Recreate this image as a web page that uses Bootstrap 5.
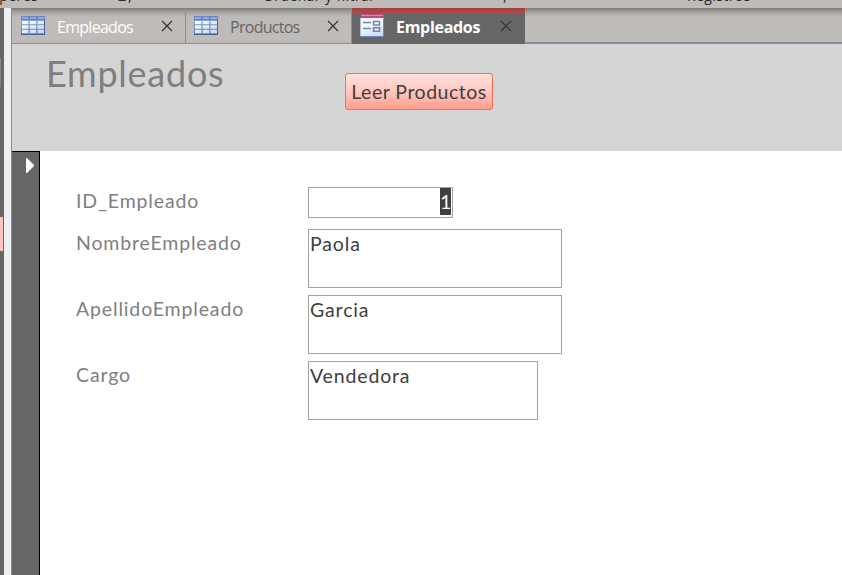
<!DOCTYPE html>
<html lang="es">
<head>
<meta charset="utf-8">
<title>Empleados</title>
<link href="https://cdn.jsdelivr.net/npm/bootstrap@5.3.0/dist/css/bootstrap.min.css" rel="stylesheet">
<style>
body{width:842px;height:575px;background:#fff;font-family:Lato,"Open Sans",sans-serif;color:#404040}
.ribbon{height:8px;background:#bfbbb8;font:14px/16px "Open Sans",sans-serif;letter-spacing:.4px;color:#262626}
.ribbon span{position:absolute;top:-12px;white-space:nowrap}
.navpane{width:4px;background:#696765}
.navpane i{position:absolute;left:0;display:block}
.nav-focus{top:209px;width:3px;height:34px;background:#ffc3c0}
.nav-thumb{top:50px;width:1px;height:29px;background:#858585}
.gutter{width:8px;background:#eff0f2;border-right:1px solid #868b92}
.tabstrip{height:36px;background:linear-gradient(#777 0,#929090 2px,#aaa7a5 5px,#b9b5b2 8px,#bfbbb8 9px);border-bottom:2px solid #8b9096;font-family:"Open Sans",sans-serif;font-size:16px}
.doc-tab{height:36px;border-right:1px solid #8b9096;border-bottom:1px solid #8b9096;color:#666;line-height:36px;background:linear-gradient(#777 0,#929090 2px,#aaa7a5 5px,#b9b5b2 8px,#bfbbb8 9px)}
.doc-tab svg{position:absolute}
.doc-tab .ic{left:9px;top:8px}
.doc-tab .cl{top:12px}
.doc-tab span{position:absolute;top:1px}
.t1{width:174px;color:#fff}.t2{width:166px}.t3{width:173px;background:linear-gradient(#a04044 0,#b6474b 5px,#666 5px);color:#fff;border:0}
.t1 span,.t2 span{letter-spacing:-.72px}
.t1 span{left:45px}.t2 span{left:44px}.t3 span{left:44px;font-weight:700;letter-spacing:-.3px}
.form-head{height:107px;background:#d5d5d5}
.form-head h1{font-size:36px;line-height:44px;font-weight:400;color:#7f7f7f;margin:7px 0 0 34px;width:299px;letter-spacing:.75px}
.btn-read{width:148px;height:37px;margin-top:29px;padding:0;font-size:19.5px;line-height:35px;border:1px solid #f1704d;border-radius:3px;color:#404040;background:linear-gradient(#ffe0dc,#ffc8c0 50%,#ff9d8d);letter-spacing:.5px}
.selector{width:28px;background:#666;border:solid #000;border-width:1px 1px 0 0;padding:6px 0 0 14px}
.fields{padding:36px 0 0 36px;font-size:19.5px;letter-spacing:.85px}
.fields label{width:232px;color:#7f7f7f;line-height:27px}
.field-box{border:1px solid #a3a3a3;height:59px;width:254px;padding:0 1px;line-height:27px}
.row-id{margin-bottom:11px}
.row-f{margin-bottom:7px}
.b-id{width:145px;height:31px;padding-right:1px}
.b-id span{background:#404040;color:#fff;height:27px;width:11px;letter-spacing:0}
.b-cargo{width:230px}
</style>
<script src="https://cdn.jsdelivr.net/npm/bootstrap@5.3.0/dist/js/bootstrap.bundle.min.js"></script>
</head>
<body class="overflow-hidden d-flex flex-column m-0">
<svg width="0" height="0" class="position-absolute">
<defs>
<linearGradient id="gc" x2="1" y2="1"><stop offset="0" stop-color="#fff"/><stop offset="1" stop-color="#c3d4f3"/></linearGradient>
<linearGradient id="gb" x2="0" y2="1"><stop offset="0" stop-color="#8fabda"/><stop offset="1" stop-color="#5f7dad"/></linearGradient>
<symbol id="grid" viewBox="0 0 24 19"><path fill="url(#gb)" d="M0 0h24v19H0z"/><path fill="#6685c4" d="M0 0h24v4H0z"/><path fill="#91acd9" d="M1 1h6v2H1zM9 1h6v2H9zM17 1h6v2h-6z"/><path fill="url(#gc)" d="M1 5h6.500v3.300H1zM8.700 5h6.500v3.300H8.700zM16.500 5h6.500v3.300h-6.500zM1 9.300h6.500v3.500H1zM8.700 9.300h6.500v3.500H8.700zM16.500 9.300h6.500v3.500h-6.500zM1 13.800h6.500v3.500H1zM8.700 13.800h6.500v3.500H8.700zM16.500 13.800h6.500v3.500h-6.500z"/><path fill="#44638f" d="M0 18h24v1H0zM23 4h1v15h-1z"/></symbol>
<symbol id="frm" viewBox="0 0 24 23"><path fill="#b4bdd4" d="M0 4h24v19H0z"/><path fill="#fafbff" d="M1 4h22v17H1z"/><path fill="url(#gc)" d="M1 12h22v10H1z"/><path fill="#6f8cc0" d="M0 22h24v1H0zM23 5h1v18h-1z"/><path fill="#b94d7b" d="M1 0h23v4H1z"/><path fill="#e287a8" d="M1 1h22v1H1z"/><path stroke="#7186ad" stroke-width="1.6" fill="none" d="M3 8.500h8M3 14.500h8M13.500 7.500h6v3.500h-6zM13.500 13.700h6v3.600h-6z"/></symbol>
<symbol id="x" viewBox="0 0 12 12"><path d="M1 1l10 10M11 1L1 11" fill="none" stroke="#333" stroke-width="1.2"/></symbol>
</defs></svg>
<header class="ribbon position-relative overflow-hidden flex-shrink-0">
<span style="left:-14px">mperes</span><span style="left:118px">Σ</span><span style="left:128px">,</span><span style="left:263px">Ordenar y filtrar</span><span style="left:503px">,</span><span style="left:687px">Registros</span>
</header>
<div class="d-flex flex-grow-1">
<aside class="navpane position-relative"><i class="nav-thumb"></i><i class="nav-focus"></i></aside>
<div class="gutter"></div>
<main class="d-flex flex-column flex-grow-1">
<nav class="tabstrip d-flex flex-shrink-0">
<div class="doc-tab t1 position-relative"><svg class="ic" width="24" height="19"><use href="#grid"/></svg><span>Empleados</span><svg class="cl" style="left:149px" width="12" height="12"><use href="#x"/></svg></div>
<div class="doc-tab t2 position-relative"><svg class="ic" style="left:8px" width="24" height="19"><use href="#grid"/></svg><span>Productos</span><svg class="cl" style="left:141px" width="12" height="12"><use href="#x"/></svg></div>
<div class="doc-tab t3 position-relative"><svg class="ic" style="left:8px;top:6px" width="24" height="23"><use href="#frm"/></svg><span>Empleados</span><svg class="cl" style="left:148px" width="12" height="12"><use href="#x"/></svg></div>
</nav>
<section class="form-head d-flex align-items-start flex-shrink-0"><h1>Empleados</h1><button class="btn btn-read">Leer Productos</button></section>
<section class="d-flex flex-grow-1">
<div class="selector"><svg class="d-block" width="9" height="16"><path fill="#fff" d="M0 0h1l7 7v1l-7 7H0z"/></svg></div>
<form class="fields d-flex flex-column">
<div class="d-flex row-id"><label>ID_Empleado</label><div class="field-box b-id d-flex justify-content-end"><span>1</span></div></div>
<div class="d-flex row-f"><label>NombreEmpleado</label><div class="field-box">Paola</div></div>
<div class="d-flex row-f"><label>ApellidoEmpleado</label><div class="field-box">Garcia</div></div>
<div class="d-flex"><label>Cargo</label><div class="field-box b-cargo">Vendedora</div></div>
</form>
</section>
</main>
</div>
</body>
</html>
